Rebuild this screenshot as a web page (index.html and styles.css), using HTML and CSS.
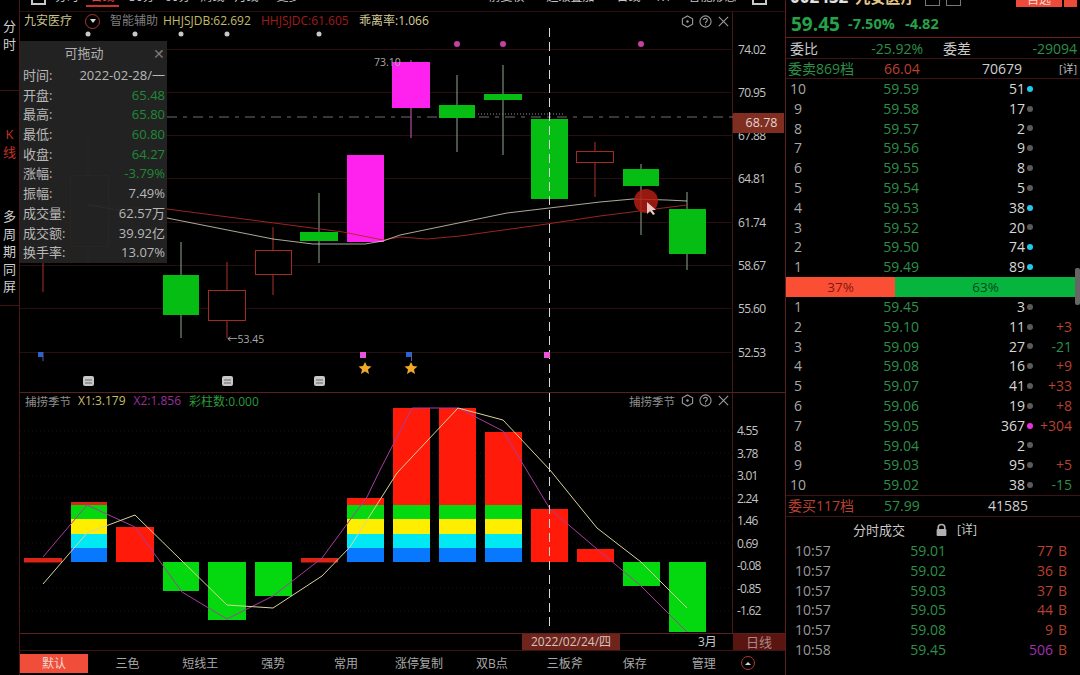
FILE: index.html
```html
<!DOCTYPE html>
<html lang="zh-CN">
<head>
<meta charset="utf-8">
<title>九安医疗</title>
<link rel="stylesheet" href="styles.css">
</head>
<body>
<div class="app">
  <nav class="side">
    <div class="side-group side-a"><span>分</span><span>时</span></div>
    <div class="side-group side-b"><span>K</span><span>线</span></div>
    <div class="side-group side-c"><span>多</span><span>周</span><span>期</span><span>同</span><span>屏</span></div>
  </nav>

  <main class="center">
    <div class="topnav">
      <i class="nav-box"></i>
      <span class="nav-item n1">分时</span>
      <span class="nav-item n2 active">日线</span>
      <span class="nav-item n3">30分</span>
      <span class="nav-item n3">60分</span>
      <span class="nav-item n3">周线</span>
      <span class="nav-item n3">月线</span>
      <span class="nav-item n4">更多</span>
      <span class="nav-item n5">前复权</span>
      <span class="nav-item n6">超级叠加</span>
      <span class="nav-item n6">日线</span>
      <span class="nav-item n8">1:1</span>
      <span class="nav-item n9">智能形态</span>
      <i class="nav-box n7"></i>
    </div>

    <section class="pane upper">
      <div class="plot">
        <svg class="chart" viewBox="20 12 713 380" aria-hidden="true">
          <g class="grid">
            <path d="M20 49.5H733M20 92.5H733M20 135.5H733M20 178.5H733M20 222.5H733M20 265.5H733M20 308.5H733M20 352.5H733"/>
          </g>
          <path class="lastline" d="M167 117H733"/>
          <path class="dotline" d="M478 114H564"/>

          <g class="wick-r">
            <path d="M43 250V292M88 137V175M88 247V262M227 262V290M227 321V338M273 227V250M273 275V295M595 142V151M595 162V197"/>
          </g>
          <g class="wick-g">
            <path d="M181 242V275M181 315V338M319 193V232M319 241V263M457 75V105M457 118V152M503 65V94M503 100V155M641 164V169M641 186V235M687 192V209M687 254V270"/>
          </g>
          <path class="wick-m" d="M411 60V62M411 108V138"/>

          <rect class="c-r" x="70.500" y="175.500" width="38" height="71"/>
          <rect class="c-g" x="163" y="275" width="36" height="40"/>
          <rect class="c-r" x="208.500" y="290.500" width="37" height="30"/>
          <rect class="c-r" x="255.500" y="250.500" width="36" height="24"/>
          <rect class="c-g" x="300" y="232" width="38" height="9"/>
          <rect class="c-m" x="347" y="155" width="37" height="87"/>
          <rect class="c-m" x="392" y="62" width="38" height="46"/>
          <rect class="c-g" x="439" y="105" width="36" height="13"/>
          <rect class="c-g" x="484" y="94" width="38" height="6"/>
          <rect class="c-g" x="531" y="119" width="37" height="80"/>
          <rect class="c-r" x="576.500" y="151.500" width="37" height="11"/>
          <rect class="c-g" x="623" y="169" width="36" height="17"/>
          <rect class="c-g" x="669" y="209" width="37" height="45"/>

          <polyline class="ma-red" points="88,205 167,209 343,232 383,240 400,237 427,239 460,236 547,224 600,216 687,205"/>
          <polyline class="ma-white" points="88,205 167,218 273,239 313,244 365,244 383,241 400,235 507,213 600,202 633,199 667,200 687,201"/>

          <path class="cross" d="M549.500 28V393"/>

          <g class="dot-w">
            <circle cx="88" cy="34" r="2.500"/><circle cx="135" cy="34" r="2.500"/><circle cx="181" cy="34" r="2.500"/><circle cx="227" cy="34" r="2.500"/><circle cx="319" cy="34" r="2.500"/>
          </g>
          <g class="dot-m">
            <circle cx="457" cy="44" r="3"/><circle cx="503" cy="44" r="3"/><circle cx="641" cy="44" r="3"/>
          </g>

          <text class="lbl" x="374" y="66">73.10</text>
          <text class="lbl" x="227" y="343">←53.45</text>

          <g class="flag-b"><rect x="38" y="352" width="5" height="5"/><rect x="406" y="352" width="6" height="5"/></g>
          <path class="pole-b" d="M43 352V361M411.500 352V361"/>
          <g class="flag-m"><rect x="360" y="352" width="6" height="6"/><rect x="544" y="352" width="6" height="6"/></g>
          <g class="star">
            <polygon points="365,362 367,366 371.500,366.500 368,369.500 369,374 365,371.500 361,374 362,369.500 358.500,366.500 363,366"/>
            <polygon points="411,362 413,366 417.500,366.500 414,369.500 415,374 411,371.500 407,374 408,369.500 404.500,366.500 409,366"/>
          </g>
          <g class="note">
            <rect x="83" y="376" width="11" height="10" rx="2"/><rect x="222" y="376" width="11" height="10" rx="2"/><rect x="314" y="376" width="11" height="10" rx="2"/>
            <path class="note-l" d="M85 380H92M85 383H92M224 380H231M224 383H231M316 380H323M316 383H323"/>
          </g>
          <circle class="pointer" cx="646" cy="201" r="12"/>
          <path class="arrow" d="M647 202V214L650 211L653 215L655 214L652 210L656 210Z"/>
        </svg>

        <div class="legend">
          <span class="l-name">九安医疗</span>
          <i class="l-circle"><b></b></i>
          <span class="l-mute">智能辅助</span>
          <span class="l-yel">HHJSJDB:62.692</span>
          <span class="l-red">HHJSJDC:61.605</span>
          <span class="l-pale">乖离率:1.066</span>
        </div>

        <div class="tools">
          <svg class="tool" viewBox="0 0 14 14"><path d="M7 1L12.500 4V10L7 13L1.500 10V4Z"/><circle class="tool-dot" cx="7" cy="7" r="1.300"/></svg>
          <svg class="tool" viewBox="0 0 14 14"><circle cx="7" cy="7" r="6"/><path d="M5 5.500C5 3 9 3 9 5.500C9 7 7 7 7 8.800M7 10V11"/></svg>
          <svg class="tool" viewBox="0 0 14 14"><path d="M2 2L12 12M12 2L2 12"/></svg>
        </div>

        <aside class="tip">
          <div class="tip-head">可拖动<span class="tip-x">✕</span></div>
          <div class="tip-row"><span>时间:</span><span>2022-02-28/一</span></div>
          <div class="tip-row"><span>开盘:</span><span class="t-g">65.48</span></div>
          <div class="tip-row"><span>最高:</span><span class="t-g">65.80</span></div>
          <div class="tip-row"><span>最低:</span><span class="t-g">60.80</span></div>
          <div class="tip-row"><span>收盘:</span><span class="t-g">64.27</span></div>
          <div class="tip-row"><span>涨幅:</span><span class="t-g">-3.79%</span></div>
          <div class="tip-row"><span>振幅:</span><span>7.49%</span></div>
          <div class="tip-row"><span>成交量:</span><span>62.57万</span></div>
          <div class="tip-row"><span>成交额:</span><span>39.92亿</span></div>
          <div class="tip-row"><span>换手率:</span><span>13.07%</span></div>
        </aside>
      </div>
      <div class="axis axis-up">
        <span>74.02</span><span>70.95</span><span>67.88</span><span>64.81</span><span>61.74</span><span>58.67</span><span>55.60</span><span>52.53</span>
        <b class="tag">68.78</b>
      </div>
    </section>

    <section class="pane lower">
      <div class="plot">
        <svg class="chart" viewBox="20 393 713 240" aria-hidden="true">
          <path class="gridlow" d="M20 431H733M20 453H733M20 476H733M20 498H733M20 521H733M20 543H733M20 588H733M20 611H733"/>
          <rect class="b-r2" x="24" y="558" width="38" height="4.500"/>
          <rect class="b-r2" x="71" y="502" width="36" height="3"/>
          <rect class="b-r" x="116" y="527" width="38" height="35"/>
          <rect class="b-g" x="163" y="562" width="36" height="29"/>
          <rect class="b-g" x="208" y="562" width="38" height="58"/>
          <rect class="b-g" x="255" y="562" width="37" height="34"/>
          <rect class="b-r2" x="301" y="558" width="37" height="4.500"/>
          <rect class="b-r" x="347" y="498" width="37" height="7"/>
          <rect class="b-r" x="393" y="408" width="37" height="97"/>
          <rect class="b-r" x="439" y="408" width="37" height="97"/>
          <rect class="b-r" x="485" y="432" width="37" height="73"/>
          <rect class="b-r" x="531" y="509" width="37" height="53"/>
          <rect class="b-r" x="577" y="549" width="37" height="13"/>
          <rect class="b-g" x="623" y="562" width="37" height="24"/>
          <rect class="b-g" x="669" y="562" width="37" height="70"/>

          <g class="b-g"><rect x="71" y="505" width="36" height="14"/><rect x="347" y="505" width="37" height="14"/><rect x="393" y="505" width="37" height="14"/><rect x="439" y="505" width="37" height="14"/><rect x="485" y="505" width="37" height="14"/></g>
          <g class="b-y"><rect x="71" y="519" width="36" height="15"/><rect x="347" y="519" width="37" height="15"/><rect x="393" y="519" width="37" height="15"/><rect x="439" y="519" width="37" height="15"/><rect x="485" y="519" width="37" height="15"/></g>
          <g class="b-c"><rect x="71" y="534" width="36" height="14"/><rect x="347" y="534" width="37" height="14"/><rect x="393" y="534" width="37" height="14"/><rect x="439" y="534" width="37" height="14"/><rect x="485" y="534" width="37" height="14"/></g>
          <g class="b-b"><rect x="71" y="548" width="36" height="14"/><rect x="347" y="548" width="37" height="14"/><rect x="393" y="548" width="37" height="14"/><rect x="439" y="548" width="37" height="14"/><rect x="485" y="548" width="37" height="14"/></g>

          <polyline class="x2" points="43,557 87,505 135,527 182,592 227,619 273,596 322,558 367,497 380,470 412,408 458,408 503,431 550,509 597,549 641,586 687,632"/>
          <polyline class="x1" points="43,584 87,533 135,515 227,605 273,608 322,576 350,547 397,473 458,408 503,420 550,470 597,528 641,562 687,608"/>
          <path class="cross" d="M549.500 393V630"/>
        </svg>
        <div class="legend2">
          <span class="l-mute2">捕捞季节</span>
          <span class="l-x1">X1:3.179</span>
          <span class="l-x2">X2:1.856</span>
          <span class="l-x3">彩柱数:0.000</span>
        </div>
        <div class="tools tools2">
          <span class="l-mute2 tools-name">捕捞季节</span>
          <svg class="tool" viewBox="0 0 14 14"><path d="M7 1L12.500 4V10L7 13L1.500 10V4Z"/><circle class="tool-dot" cx="7" cy="7" r="1.300"/></svg>
          <svg class="tool" viewBox="0 0 14 14"><circle cx="7" cy="7" r="6"/><path d="M5 5.500C5 3 9 3 9 5.500C9 7 7 7 7 8.800M7 10V11"/></svg>
          <svg class="tool" viewBox="0 0 14 14"><path d="M2 2L12 12M12 2L2 12"/></svg>
        </div>
      </div>
      <div class="axis axis-low">
        <span>4.55</span><span>3.78</span><span>3.01</span><span>2.24</span><span>1.46</span><span>0.69</span><span>-0.08</span><span>-0.85</span><span>-1.62</span>
      </div>
    </section>

    <div class="datebar">
      <div class="date-track">
        <span class="date-now">2022/02/24/四</span>
        <span class="date-month">3月</span>
      </div>
      <span class="date-cycle">日线</span>
    </div>

    <div class="tabs">
      <span class="tab on">默认</span>
      <span class="tab">三色</span>
      <span class="tab">短线王</span>
      <span class="tab">强势</span>
      <span class="tab">常用</span>
      <span class="tab">涨停复制</span>
      <span class="tab">双B点</span>
      <span class="tab">三板斧</span>
      <span class="tab t-save">保存</span>
      <span class="tab t-manage">管理</span>
      <i class="tab-up"><b></b></i>
    </div>
  </main>

  <aside class="book">
    <div class="b-head">
      <span class="b-code">002432</span>
      <span class="b-name">九安医疗</span>
      <i class="b-ico first"></i><i class="b-ico"></i>
      <span class="b-btn">自选</span>
      <span class="b-btn small"></span>
    </div>
    <div class="b-quote">
      <span class="q-price">59.45</span>
      <span class="q-pct">-7.50%</span>
      <span class="q-chg">-4.82</span>
    </div>
    <div class="b-ratio">
      <span class="r-a">委比</span><span class="r-b grn">-25.92%</span>
      <span class="r-c">委差</span><span class="r-d grn">-29094</span>
    </div>
    <div class="b-total">
      <span class="tt-a grn">委卖869档</span><span class="tt-b red">66.04</span><span class="tt-c">70679</span><span class="tt-d">[详]</span>
    </div>

    <div class="levels asks">
      <div class="lv"><span>10</span><span class="pr">59.59</span><span class="qt">51</span><i class="dt blue"></i><span></span></div>
      <div class="lv"><span>9</span><span class="pr">59.58</span><span class="qt">17</span><i class="dt"></i><span></span></div>
      <div class="lv"><span>8</span><span class="pr">59.57</span><span class="qt">2</span><i class="dt"></i><span></span></div>
      <div class="lv"><span>7</span><span class="pr">59.56</span><span class="qt">9</span><i class="dt"></i><span></span></div>
      <div class="lv"><span>6</span><span class="pr">59.55</span><span class="qt">8</span><i class="dt"></i><span></span></div>
      <div class="lv"><span>5</span><span class="pr">59.54</span><span class="qt">5</span><i class="dt"></i><span></span></div>
      <div class="lv"><span>4</span><span class="pr">59.53</span><span class="qt">38</span><i class="dt blue"></i><span></span></div>
      <div class="lv"><span>3</span><span class="pr">59.52</span><span class="qt">20</span><i class="dt"></i><span></span></div>
      <div class="lv"><span>2</span><span class="pr">59.50</span><span class="qt">74</span><i class="dt blue"></i><span></span></div>
      <div class="lv"><span>1</span><span class="pr">59.49</span><span class="qt">89</span><i class="dt blue"></i><span></span></div>
    </div>

    <div class="ratio-bar"><span class="rb-r">37%</span><span class="rb-g">63%</span></div>

    <div class="levels bids">
      <div class="lv"><span>1</span><span class="pr">59.45</span><span class="qt">3</span><i class="dt"></i><span></span></div>
      <div class="lv"><span>2</span><span class="pr">59.10</span><span class="qt">11</span><i class="dt"></i><span class="up">+3</span></div>
      <div class="lv"><span>3</span><span class="pr">59.09</span><span class="qt">27</span><i class="dt"></i><span class="dn">-21</span></div>
      <div class="lv"><span>4</span><span class="pr">59.08</span><span class="qt">16</span><i class="dt"></i><span class="up">+9</span></div>
      <div class="lv"><span>5</span><span class="pr">59.07</span><span class="qt">41</span><i class="dt"></i><span class="up">+33</span></div>
      <div class="lv"><span>6</span><span class="pr">59.06</span><span class="qt">19</span><i class="dt"></i><span class="up">+8</span></div>
      <div class="lv"><span>7</span><span class="pr">59.05</span><span class="qt">367</span><i class="dt mag"></i><span class="up">+304</span></div>
      <div class="lv"><span>8</span><span class="pr">59.04</span><span class="qt">2</span><i class="dt"></i><span></span></div>
      <div class="lv"><span>9</span><span class="pr">59.03</span><span class="qt">95</span><i class="dt"></i><span class="up">+5</span></div>
      <div class="lv"><span>10</span><span class="pr">59.02</span><span class="qt">38</span><i class="dt"></i><span class="dn">-15</span></div>
    </div>

    <div class="b-total buy">
      <span class="tt-a red">委买117档</span><span class="tt-b grn">57.99</span><span class="tt-e">41585</span>
    </div>

    <div class="trade-head">
      <span>分时成交</span>
      <svg class="lock" viewBox="0 0 12 12"><path class="lock-s" d="M3 6V4C3 0.500 9 0.500 9 4V6"/><rect class="lock-b" x="1.500" y="5.500" width="9" height="6.500" rx="1"/></svg>
      <span class="th-d">[详]</span>
    </div>
    <div class="trades">
      <div class="tr"><span>10:57</span><span class="grn">59.01</span><span class="red">77</span><span class="red">B</span></div>
      <div class="tr"><span>10:57</span><span class="grn">59.02</span><span class="red">36</span><span class="red">B</span></div>
      <div class="tr"><span>10:57</span><span class="grn">59.03</span><span class="red">37</span><span class="red">B</span></div>
      <div class="tr"><span>10:57</span><span class="grn">59.05</span><span class="red">44</span><span class="red">B</span></div>
      <div class="tr"><span>10:57</span><span class="grn">59.08</span><span class="red">9</span><span class="red">B</span></div>
      <div class="tr"><span>10:58</span><span class="grn">59.45</span><span class="pur">506</span><span class="red">B</span></div>
    </div>
    <i class="scroll"></i>
  </aside>
</div>
</body>
</html>
```

FILE: styles.css
```css
* { box-sizing: border-box; }
html, body { margin: 0; padding: 0; background: #000; }
body { font-family: "Open Sans", "Noto Sans CJK SC", sans-serif; color: #c9c9c9; }
i { display: block; }

.app { display: flex; width: 1080px; height: 675px; overflow: hidden; background: #000; }

/* left rail */
.side { width: 20px; flex: none; border-right: 1px solid #4a1818; display: flex; flex-direction: column; font-size: 13px; text-align: center; }
.side-group { display: flex; flex-direction: column; border-bottom: 1px solid #3d1414; line-height: 17.500px; }
.side-a { height: 91px; padding-top: 18px; color: #cfcfcf; }
.side-b { height: 35px; border: 0; padding-top: 35px; color: #c0332a; }
.side-c { height: 180px; padding-top: 82px; color: #cfcfcf; }

/* center */
.center { width: 765px; flex: none; display: flex; flex-direction: column; }
.topnav { height: 12px; flex: none; display: flex; align-items: flex-end; overflow: hidden; border-bottom: 1px solid #2c0f0f; padding: 0 0 6px 11px; font-size: 12px; line-height: 16px; color: #c4c4c4; }
.nav-box { width: 15px; height: 14px; flex: none; border: 2px solid #c9c9c9; }
.nav-item { flex: none; white-space: nowrap; }
.nav-item.active { color: #e0483a; box-shadow: 0 2px 0 #c8322a; padding: 0 4.500px; }
.n1 { margin-left: 9px; }
.n2 { margin-left: 7px; }
.n3 { margin-left: 10px; }
.n4 { margin-left: 18px; }
.n5 { margin-left: 188px; }
.n6 { margin-left: 22px; }
.n8 { margin-left: 14px; }
.n9 { margin-left: 17px; }
.n7 { margin-left: 16px; }

.pane { display: flex; flex: none; }
.upper { height: 381px; border-bottom: 1px solid #5a2020; }
.lower { height: 241px; border-bottom: 1px solid #5a2020; }
.plot { position: relative; width: 713px; flex: none; border-right: 1px solid #4a1818; }
.chart { display: block; width: 713px; height: 100%; }

.grid path { stroke: #2a0d0d; stroke-width: 1; fill: none; }
.gridlow { stroke: #1c1010; stroke-width: 1; stroke-dasharray: 1 3; fill: none; }
.lastline { stroke: #6e6e6e; stroke-width: 1; stroke-dasharray: 10 6 4 6; fill: none; }
.dotline { stroke: #8a8a8a; stroke-width: 1; stroke-dasharray: 1 2; fill: none; }
.wick-r path { stroke: #8e2a22; stroke-width: 1.200; fill: none; }
.wick-g path { stroke: #8fa88f; stroke-width: 1; fill: none; }
.wick-m { stroke: #b04fa0; stroke-width: 1.200; fill: none; }
.c-g { fill: #06bd14; }
.c-m { fill: #ff22ee; }
.c-r { fill: #000; stroke: #a42a22; stroke-width: 1; }
.ma-red { fill: none; stroke: #a82a24; stroke-width: .9; }
.ma-white { fill: none; stroke: #d8d4c0; stroke-width: .8; }
.cross { stroke: #d8d8d8; stroke-width: 1; stroke-dasharray: 9 5; fill: none; }
.dot-w circle { fill: #c8c8c8; }
.dot-m circle { fill: #c83fa0; }
.lbl { fill: #a8a8a8; font-size: 10.500px; }
.flag-b rect { fill: #2a62d8; }
.pole-b { stroke: #50609a; stroke-width: 1; fill: none; }
.flag-m rect { fill: #e855d8; }
.star polygon { fill: #f0a828; }
.note rect { fill: #c8c8c8; }
.note-l { stroke: #666; stroke-width: 1; fill: none; }
.pointer { fill: #b01c10; fill-opacity: .85; }
.arrow { fill: #e8c8c8; }

.legend { position: absolute; left: 4px; top: 1px; height: 16px; display: flex; align-items: center; font-size: 12px; line-height: 16px; white-space: nowrap; }
.l-name { color: #c9c28c; width: 61px; }
.l-circle { width: 15px; height: 15px; flex: none; border: 1px solid #a53a30; border-radius: 50%; display: flex; align-items: center; justify-content: center; }
.l-circle b { width: 0; height: 0; border: 3px solid transparent; border-top: 4px solid #d8d8d8; border-bottom: 0; }
.l-mute { color: #7e7e7e; margin-left: 10px; width: 53px; }
.l-yel { color: #c3bb6c; width: 98px; }
.l-red { color: #a01c1c; width: 98px; }
.l-pale { color: #d8cf9a; }

.tools { position: absolute; right: 2px; top: 1px; height: 17px; display: flex; align-items: center; gap: 5px; }
.tool { width: 13px; height: 13px; fill: none; stroke: #9a9a9a; stroke-width: 1.200; }
.tool-dot { fill: #9a9a9a; stroke: none; }
.tools2 { top: 0; height: 15px; }
.tools-name { margin-right: 1px; }

.tip { position: absolute; left: 0; top: 29px; width: 147px; height: 222px; padding: 0 2px 0 3px; background: rgba(36,36,36,.95); font-size: 13px; line-height: 19.700px; }
.tip-head { position: relative; height: 25px; line-height: 25px; text-align: center; color: #b0b0b0; padding-right: 20px; }
.tip-x { position: absolute; right: 0; top: 0; color: #7a7a7a; font-size: 14px; }
.tip-row { display: flex; justify-content: space-between; height: 19.700px; color: #b8b8b8; white-space: nowrap; }
.t-g { color: #1e8a36; }

.axis { width: 52px; flex: none; position: relative; display: flex; flex-direction: column; font-size: 12px; letter-spacing: -.6px; color: #c4c4c4; padding-left: 5px; }
.axis-up { padding-top: 28.500px; }
.axis-up span { height: 43.300px; line-height: 18px; }
.axis-low { padding-top: 29px; padding-left: 4px; letter-spacing: -.8px; }
.axis-low span { height: 22.500px; line-height: 18px; }
.tag { position: absolute; left: 0; top: 101px; width: 51px; height: 20px; line-height: 20px; text-align: center; background: #7f2e20; color: #e4d4d0; font-weight: 400; padding-left: 6px; font-size: 12.500px; letter-spacing: 0; }

.legend2 { position: absolute; left: 5px; top: 0; height: 15px; display: flex; align-items: center; font-size: 12px; white-space: nowrap; }
.l-mute2 { color: #8e8e8e; font-size: 11.500px; }
.l-x1 { color: #c7bf66; margin-left: 7px; }
.l-x2 { color: #9c2e9c; margin-left: 8px; }
.l-x3 { color: #2a9a3a; margin-left: 8px; }

.b-r { fill: #ff1a0a; }
.b-r2 { fill: #dd2315; }
.b-g, .b-g rect { fill: #04d80e; }
.b-y rect { fill: #ffee00; }
.b-c rect { fill: #00e8f4; }
.b-b rect { fill: #0878ff; }
.x1 { fill: none; stroke: #d8d49a; stroke-width: 1; }
.x2 { fill: none; stroke: #a83ca0; stroke-width: 1; }

.datebar { height: 17px; flex: none; display: flex; border-bottom: 1px solid #3d1414; font-size: 12px; line-height: 16px; }
.date-track { width: 713px; flex: none; position: relative; display: flex; }
.date-now { margin-left: 502px; width: 98px; text-align: center; background: #6e241a; color: #d4c4c0; }
.date-month { margin-left: 78px; color: #c9c9c9; }
.date-cycle { flex: 1; text-align: center; background: #5a1510; color: #a88; font-size: 13px; }

.tabs { height: 24px; flex: none; display: flex; align-items: center; font-size: 12px; color: #a8a8a8; position: relative; }
.tab { width: 72.900px; text-align: center; flex: none; white-space: nowrap; }
.tab.on { width: 68px; height: 19px; line-height: 19px; background: #f04e3a; color: #f0d8d0; margin-right: 3px; }
.tab.t-save { width: 67px; }
.tab.t-manage { width: 71px; }
.tab-up { width: 14px; height: 14px; margin-left: 1.500px; border: 1px solid #a53a30; border-radius: 50%; display: flex; align-items: center; justify-content: center; }
.tab-up b { width: 0; height: 0; border: 3px solid transparent; border-bottom: 3px solid #d8d8d8; border-top: 0; }

/* order book */
.book { position: relative; width: 295px; min-width: 0; flex: none; border-left: 1px solid #5a1e1e; display: flex; flex-direction: column; font-size: 14px; }
.grn { color: #2c9148; }
.red { color: #b9402f; }
.pur { color: #a030b0; }

.b-head { height: 10px; flex: none; overflow: hidden; display: flex; align-items: flex-end; padding: 0 3px 3px 4px; line-height: 16px; white-space: nowrap; }
.b-code { color: #e0e0e0; font-weight: 700; font-size: 17px; margin-bottom: 2px; }
.b-name { color: #e8c88a; font-weight: 700; font-size: 15px; margin: 0 0 2px 7px; }
.b-ico { width: 15px; height: 14px; flex: none; border: 1px solid #777; margin: 0 0 1px 6px; }
.b-ico.first { margin-left: 10px; }
.b-btn { width: 46px; height: 12px; flex: none; background: #ee4a3a; color: #fadcd0; font-size: 12px; line-height: 10px; text-align: center; margin-left: auto; }
.b-btn.small { width: 13px; margin-left: 2px; }

.b-quote { height: 28px; flex: none; display: flex; align-items: center; padding-left: 5px; border-bottom: 1px solid #6a1e1e; font-weight: 700; color: #25a24a; white-space: nowrap; }
.q-price { font-size: 19px; width: 57px; }
.q-pct { font-size: 14.500px; width: 57px; }
.q-chg { font-size: 14.500px; }

.b-ratio { height: 21px; flex: none; display: flex; align-items: center; padding: 0 3px 0 4px; border-bottom: 1px solid #3d1414; }
.r-a { width: 50px; color: #c9c9c9; }
.r-b { width: 83px; text-align: right; }
.r-c { margin-left: 20px; width: 40px; color: #c9c9c9; }
.r-d { flex: 1; text-align: right; }

.b-total { height: 20px; flex: none; display: flex; align-items: center; padding: 0 0 1px 2px; border-bottom: 1px solid #3d1414; white-space: nowrap; }
.tt-a { width: 96px; }
.tt-b { width: 60px; }
.tt-c { width: 77px; text-align: right; color: #d0d0d0; margin-left: 1px; }
.tt-d { margin-left: 37px; font-size: 11px; color: #b8b8b8; }
.tt-e { margin-left: 44px; color: #d0d0d0; }
.buy { height: 22px; border-top: 1px solid #3d1414; padding-bottom: 2px; }

.levels { flex: none; }
.lv { display: grid; grid-template-columns: 24px 109px 106px 10px 37px; height: 19.800px; line-height: 19.800px; align-items: center; color: #a8a8a8; }
.lv > span:first-child { text-align: center; }
.pr { text-align: right; color: #2c9148; }
.qt { text-align: right; color: #d8d8d8; }
.dt { width: 6px; height: 6px; border-radius: 50%; background: #5a5a5a; margin-left: 2px; }
.dt.blue { background: #22c8ee; }
.dt.mag { background: #ee30dc; }
.lv .up { text-align: right; color: #b9402f; }
.lv .dn { text-align: right; color: #2c9148; }
.asks { height: 198px; }
.ratio-bar { display: flex; height: 20px; width: 290px; flex: none; font-size: 13.500px; line-height: 20px; text-align: center; }
.rb-r { width: 109px; background: #fb4f35; color: #7c1a10; }
.rb-g { width: 181px; background: #07b53e; color: #07491e; }
.bids { height: 198px; }

.trade-head { height: 24px; flex: none; display: flex; align-items: center; padding-left: 67px; font-size: 13px; color: #c9c9c9; }
.lock { width: 13px; height: 13px; margin-left: 30px; }
.lock-s { fill: none; stroke: #b0b0b0; stroke-width: 1.500; }
.lock-b { fill: #b0b0b0; }
.th-d { margin-left: 9px; font-size: 12px; }
.tr { display: grid; grid-template-columns: 9px 51px 100px 107px 14px; height: 19.800px; line-height: 19.800px; color: #9a9a9a; }
.tr::before { content: ""; }
.tr span:nth-child(2), .tr span:nth-child(3), .tr span:nth-child(4) { text-align: right; }
.scroll { position: absolute; right: 0; top: 268px; width: 5px; height: 37px; background: #666; border-radius: 2px; }
```
